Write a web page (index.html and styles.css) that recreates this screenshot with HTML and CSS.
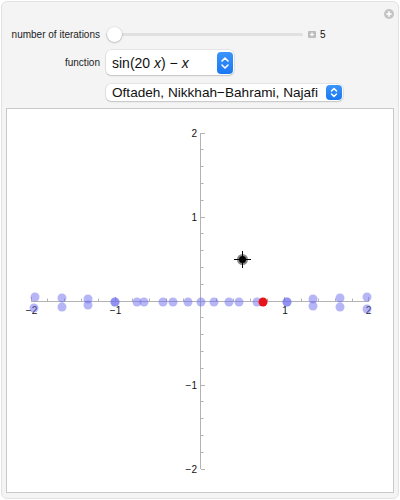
FILE: index.html
```html
<!DOCTYPE html>
<html lang="en">
<head>
  <meta charset="UTF-8">
  <title>Root finding iterations</title>
  <link rel="stylesheet" href="styles.css">
</head>
<body>
  <div class="panel">
    <div class="panel-head">
      <span class="add-btn">
        <svg width="10" height="10" viewBox="0 0 10 10"><circle cx="5" cy="5" r="5" fill="#c4c4c4"/><path d="M5 2.3v5.4M2.3 5h5.4" stroke="#fff" stroke-width="1.6"/></svg>
      </span>
    </div>

    <div class="controls">
      <div class="row">
        <span class="label">number of iterations</span>
        <div class="slider">
          <div class="track"></div>
          <div class="knob"></div>
        </div>
        <span class="step-btn">
          <svg width="8" height="7" viewBox="0 0 8 7"><rect width="8" height="7" rx="1" fill="#bdbdbd"/><path d="M4 1.5v4M2 3.5h4" stroke="#fff" stroke-width="1.2"/></svg>
        </span>
        <span class="value">5</span>
      </div>

      <div class="row row-func">
        <span class="label">function</span>
        <div class="popup popup-big">
          <span class="popup-text">sin(20 <i>x</i>) &minus; <i>x</i></span>
          <span class="popup-btn">
            <svg width="16" height="22" viewBox="0 0 16 22"><path d="M5 9l3-3 3 3M5 13l3 3 3-3" fill="none" stroke="#fff" stroke-width="1.6" stroke-linecap="round" stroke-linejoin="round"/></svg>
          </span>
        </div>
      </div>

      <div class="row row-method">
        <span class="label"></span>
        <div class="popup popup-small">
          <span class="popup-text">Oftadeh, Nikkhah&minus;Bahrami, Najafi</span>
          <span class="popup-btn">
            <svg width="16" height="15" viewBox="0 0 16 15"><path d="M5.5 6l2.5-2.5 2.5 2.5M5.5 9l2.5 2.5 2.5-2.5" fill="none" stroke="#fff" stroke-width="1.5" stroke-linecap="round" stroke-linejoin="round"/></svg>
          </span>
        </div>
      </div>
    </div>

    <div class="plot">
      <svg width="385" height="383" viewBox="7 108 385 383">
        <!-- axes -->
        <g class="axis">
          <path d="M31 300.5H369M200.5 132V468"/>
          <path d="M31.5 300v-4M115.5 300v-4M284.5 300v-4M368.5 300v-4
                   M47.5 300v-2.5M64.5 300v-2.5M81.5 300v-2.5M98.5 300v-2.5
                   M132.5 300v-2.5M149.5 300v-2.5M166.5 300v-2.5M183.5 300v-2.5
                   M216.5 300v-2.5M233.5 300v-2.5M250.5 300v-2.5M267.5 300v-2.5
                   M301.5 300v-2.5M318.5 300v-2.5M335.5 300v-2.5M352.5 300v-2.5"/>
          <path d="M201 132.5h4M201 216.5h4M201 384.5h4M201 468.5h4
                   M201 148.5h2.5M201 165.5h2.5M201 182.5h2.5M201 199.5h2.5
                   M201 232.5h2.5M201 249.5h2.5M201 266.5h2.5M201 283.5h2.5
                   M201 316.5h2.5M201 333.5h2.5M201 350.5h2.5M201 367.5h2.5
                   M201 400.5h2.5M201 417.5h2.5M201 434.5h2.5M201 451.5h2.5"/>
        </g>
        <g class="tick-labels">
          <text x="197" y="136" text-anchor="end">2</text>
          <text x="197" y="220" text-anchor="end">1</text>
          <text x="197" y="388" text-anchor="end">&minus;1</text>
          <text x="197" y="472" text-anchor="end">&minus;2</text>
          <text x="31.5" y="313" text-anchor="middle">&minus;2</text>
          <text x="115.5" y="313" text-anchor="middle">&minus;1</text>
          <text x="285" y="313" text-anchor="middle">1</text>
          <text x="368.5" y="313" text-anchor="middle">2</text>
        </g>

        <!-- iterates -->
        <g class="iterates">
          <circle cx="35" cy="296" r="4.5"/><circle cx="34" cy="307" r="4.5"/>
          <circle cx="62" cy="297" r="4.5"/><circle cx="62" cy="306" r="4.5"/>
          <circle cx="88" cy="298" r="4.5"/><circle cx="88" cy="304" r="4.5"/>
          <circle cx="115" cy="301" r="4.5"/><circle cx="115" cy="301" r="4.5"/>
          <circle cx="137" cy="301" r="4.5"/><circle cx="144" cy="301" r="4.5"/>
          <circle cx="163" cy="301" r="4.5"/><circle cx="173" cy="301" r="4.5"/>
          <circle cx="188" cy="301" r="4.5"/><circle cx="201" cy="301" r="4.5"/>
          <circle cx="214" cy="301" r="4.5"/><circle cx="229" cy="301" r="4.5"/>
          <circle cx="239" cy="301" r="4.5"/><circle cx="257" cy="301" r="4.5"/>
          <circle cx="287" cy="301" r="4.5"/><circle cx="287" cy="301" r="4.5"/>
          <circle cx="313" cy="298" r="4.5"/><circle cx="313" cy="305" r="4.5"/>
          <circle cx="340" cy="297" r="4.5"/><circle cx="340" cy="306" r="4.5"/>
          <circle cx="367" cy="296" r="4.5"/><circle cx="367" cy="308" r="4.5"/>
        </g>
        <circle class="root" cx="263" cy="301" r="4.5"/>

        <!-- locator -->
        <g class="locator">
          <circle cx="242.5" cy="258.5" r="5.5" fill="#888"/>
          <circle cx="242.5" cy="258.5" r="3.5" fill="#000"/>
          <path d="M234 258.5h17M242.5 250v17" stroke="#000" stroke-width="1"/>
        </g>
      </svg>
    </div>
  </div>
</body>
</html>
```

FILE: styles.css
```css
body {
  margin: 0;
  background: #fff;
  font-family: "Liberation Sans", Arial, sans-serif;
}
.panel {
  margin: 1px;
  height: 496px;
  border: 1px solid #e2e2e2;
  border-radius: 6px;
  background: #f4f4f4;
  padding: 0 4px;
}
.panel-head {
  display: flex;
  justify-content: flex-end;
  padding-top: 7px;
  height: 10px;
}
.add-btn {
  display: block;
  width: 10px;
  height: 10px;
}
.add-btn svg {
  display: block;
}
.controls {
  padding-top: 7px;
}
.row {
  display: flex;
  align-items: center;
}
.label {
  width: 94px;
  margin-right: 6px;
  text-align: right;
  font-size: 10px;
  color: #222;
}
.slider {
  position: relative;
  width: 197px;
  height: 16px;
  display: flex;
  align-items: center;
}
.track {
  flex: 1;
  height: 3px;
  border-radius: 2px;
  background: #e0e0e0;
}
.knob {
  position: absolute;
  left: 1px;
  top: 0.5px;
  width: 15px;
  height: 15px;
  border-radius: 50%;
  background: #fff;
  box-shadow: 0 0.5px 2px rgba(0, 0, 0, 0.35);
}
.step-btn {
  margin-left: 5px;
  height: 7px;
}
.step-btn svg {
  display: block;
}
.value {
  margin-left: 4px;
  font-size: 10px;
  color: #111;
}
.row-func {
  margin-top: 8px;
}
.row-method {
  margin-top: 9px;
}
.popup {
  display: flex;
  align-items: center;
  justify-content: space-between;
  background: #fff;
  border-radius: 5px;
  box-shadow: 0 0 0 0.5px rgba(0, 0, 0, 0.12), 0 1px 1.5px rgba(0, 0, 0, 0.15);
}
.popup-text {
  padding-left: 6px;
  color: #111;
  white-space: nowrap;
}
.popup-big {
  width: 128px;
  height: 25px;
}
.popup-big .popup-text {
  font-size: 14px;
}
.popup-big .popup-btn {
  margin-right: 1px;
  height: 22px;
}
.popup-small {
  width: 237px;
  height: 17px;
}
.popup-small .popup-text {
  font-size: 13.6px;
}
.popup-small .popup-btn {
  margin-right: 1px;
  height: 15px;
}
.popup-btn {
  display: block;
  width: 16px;
  border-radius: 4px;
  background: linear-gradient(#3b95fb, #1a78f2);
}
.popup-btn svg {
  display: block;
}
.plot {
  margin-top: 7px;
  height: 383px;
  border: 1px solid #c9c9c9;
  background: #fff;
}
.plot svg {
  display: block;
}
.axis path {
  fill: none;
  stroke: #b3b3b3;
  stroke-width: 1;
}
.tick-labels text {
  font-family: "Liberation Sans", Arial, sans-serif;
  font-size: 10px;
  fill: #111;
}
.iterates circle {
  fill: rgb(110, 110, 240);
  fill-opacity: 0.5;
}
.root {
  fill: #e8141b;
}
```
